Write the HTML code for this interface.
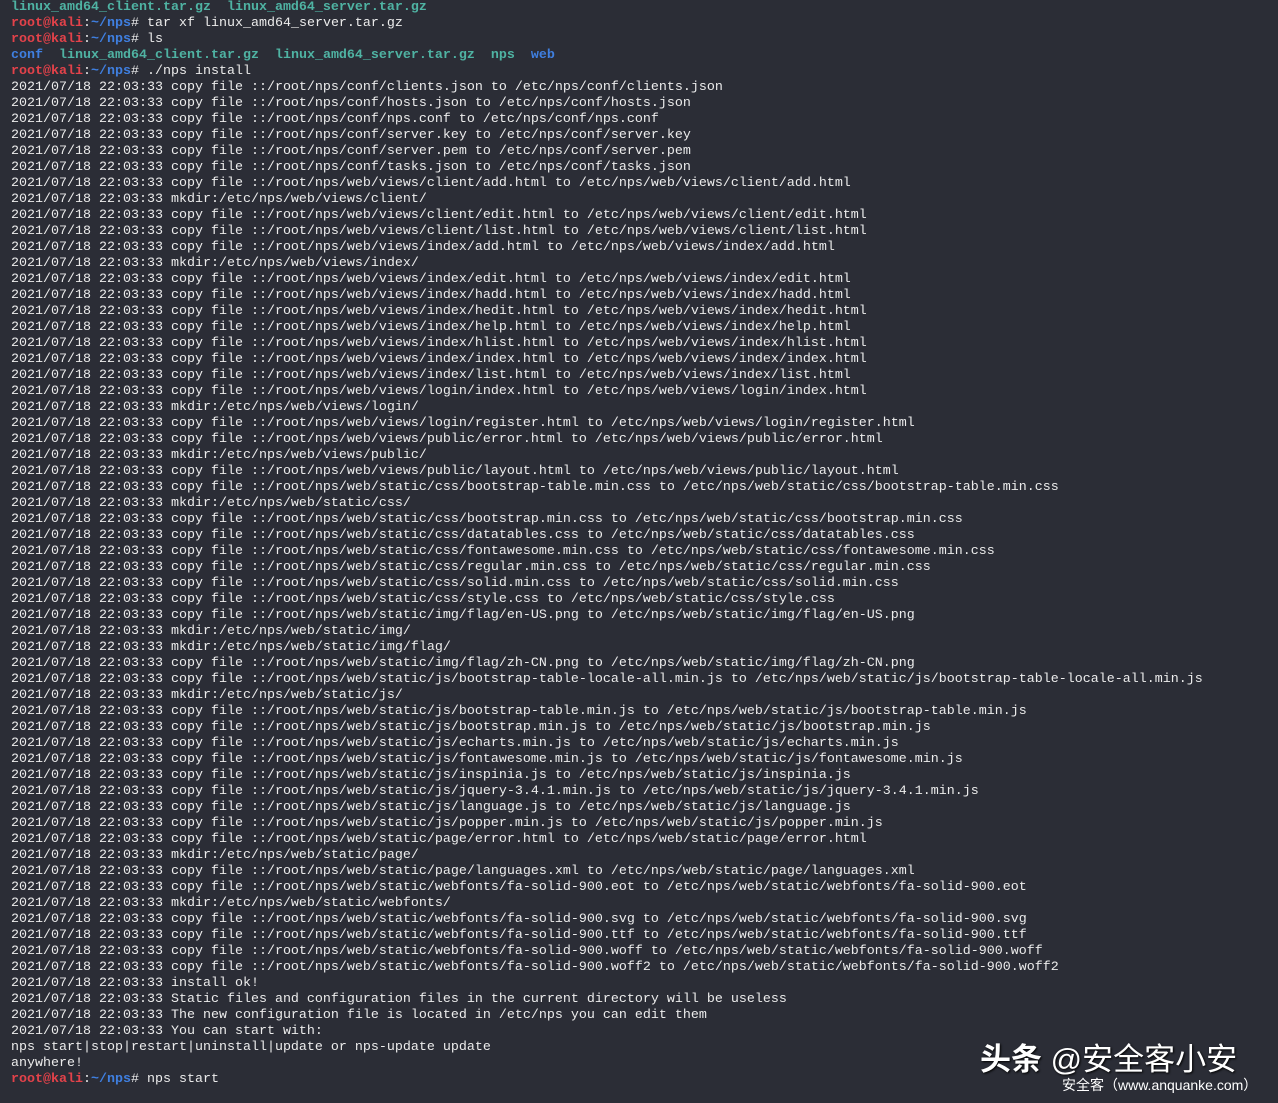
<!DOCTYPE html>
<html><head><meta charset="utf-8"><style>
html,body{margin:0;padding:0;background:#2b2d36;width:1278px;height:1103px;overflow:hidden}
pre{margin:0;position:absolute;left:11px;top:0px;font-family:"Liberation Mono",monospace;font-size:13.33px;line-height:16px;color:#ececec;white-space:pre}
.r{color:#e3424a;font-weight:bold}.b{color:#3f7fe0;font-weight:bold}.t{color:#4fb3a3;font-weight:bold}
.w1{position:absolute;left:980px;top:1034px;font-family:"Liberation Sans","Noto Sans CJK SC",sans-serif;font-size:31px;color:#fff;text-shadow:1px 1px 2px #000;white-space:nowrap}
.w2{position:absolute;left:1062px;top:1075px;font-family:"Liberation Sans","Noto Sans CJK SC",sans-serif;font-size:14px;color:#fff;white-space:nowrap}
</style></head><body>
<pre><span class="t">linux_amd64_client.tar.gz  linux_amd64_server.tar.gz</span>
<span class="r">root@kali</span>:<span class="b">~/nps</span># tar xf linux_amd64_server.tar.gz
<span class="r">root@kali</span>:<span class="b">~/nps</span># ls
<span class="b">conf</span>  <span class="t">linux_amd64_client.tar.gz  linux_amd64_server.tar.gz  nps</span>  <span class="b">web</span>
<span class="r">root@kali</span>:<span class="b">~/nps</span># ./nps install
2021/07/18 22:03:33 copy file ::/root/nps/conf/clients.json to /etc/nps/conf/clients.json
2021/07/18 22:03:33 copy file ::/root/nps/conf/hosts.json to /etc/nps/conf/hosts.json
2021/07/18 22:03:33 copy file ::/root/nps/conf/nps.conf to /etc/nps/conf/nps.conf
2021/07/18 22:03:33 copy file ::/root/nps/conf/server.key to /etc/nps/conf/server.key
2021/07/18 22:03:33 copy file ::/root/nps/conf/server.pem to /etc/nps/conf/server.pem
2021/07/18 22:03:33 copy file ::/root/nps/conf/tasks.json to /etc/nps/conf/tasks.json
2021/07/18 22:03:33 copy file ::/root/nps/web/views/client/add.html to /etc/nps/web/views/client/add.html
2021/07/18 22:03:33 mkdir:/etc/nps/web/views/client/
2021/07/18 22:03:33 copy file ::/root/nps/web/views/client/edit.html to /etc/nps/web/views/client/edit.html
2021/07/18 22:03:33 copy file ::/root/nps/web/views/client/list.html to /etc/nps/web/views/client/list.html
2021/07/18 22:03:33 copy file ::/root/nps/web/views/index/add.html to /etc/nps/web/views/index/add.html
2021/07/18 22:03:33 mkdir:/etc/nps/web/views/index/
2021/07/18 22:03:33 copy file ::/root/nps/web/views/index/edit.html to /etc/nps/web/views/index/edit.html
2021/07/18 22:03:33 copy file ::/root/nps/web/views/index/hadd.html to /etc/nps/web/views/index/hadd.html
2021/07/18 22:03:33 copy file ::/root/nps/web/views/index/hedit.html to /etc/nps/web/views/index/hedit.html
2021/07/18 22:03:33 copy file ::/root/nps/web/views/index/help.html to /etc/nps/web/views/index/help.html
2021/07/18 22:03:33 copy file ::/root/nps/web/views/index/hlist.html to /etc/nps/web/views/index/hlist.html
2021/07/18 22:03:33 copy file ::/root/nps/web/views/index/index.html to /etc/nps/web/views/index/index.html
2021/07/18 22:03:33 copy file ::/root/nps/web/views/index/list.html to /etc/nps/web/views/index/list.html
2021/07/18 22:03:33 copy file ::/root/nps/web/views/login/index.html to /etc/nps/web/views/login/index.html
2021/07/18 22:03:33 mkdir:/etc/nps/web/views/login/
2021/07/18 22:03:33 copy file ::/root/nps/web/views/login/register.html to /etc/nps/web/views/login/register.html
2021/07/18 22:03:33 copy file ::/root/nps/web/views/public/error.html to /etc/nps/web/views/public/error.html
2021/07/18 22:03:33 mkdir:/etc/nps/web/views/public/
2021/07/18 22:03:33 copy file ::/root/nps/web/views/public/layout.html to /etc/nps/web/views/public/layout.html
2021/07/18 22:03:33 copy file ::/root/nps/web/static/css/bootstrap-table.min.css to /etc/nps/web/static/css/bootstrap-table.min.css
2021/07/18 22:03:33 mkdir:/etc/nps/web/static/css/
2021/07/18 22:03:33 copy file ::/root/nps/web/static/css/bootstrap.min.css to /etc/nps/web/static/css/bootstrap.min.css
2021/07/18 22:03:33 copy file ::/root/nps/web/static/css/datatables.css to /etc/nps/web/static/css/datatables.css
2021/07/18 22:03:33 copy file ::/root/nps/web/static/css/fontawesome.min.css to /etc/nps/web/static/css/fontawesome.min.css
2021/07/18 22:03:33 copy file ::/root/nps/web/static/css/regular.min.css to /etc/nps/web/static/css/regular.min.css
2021/07/18 22:03:33 copy file ::/root/nps/web/static/css/solid.min.css to /etc/nps/web/static/css/solid.min.css
2021/07/18 22:03:33 copy file ::/root/nps/web/static/css/style.css to /etc/nps/web/static/css/style.css
2021/07/18 22:03:33 copy file ::/root/nps/web/static/img/flag/en-US.png to /etc/nps/web/static/img/flag/en-US.png
2021/07/18 22:03:33 mkdir:/etc/nps/web/static/img/
2021/07/18 22:03:33 mkdir:/etc/nps/web/static/img/flag/
2021/07/18 22:03:33 copy file ::/root/nps/web/static/img/flag/zh-CN.png to /etc/nps/web/static/img/flag/zh-CN.png
2021/07/18 22:03:33 copy file ::/root/nps/web/static/js/bootstrap-table-locale-all.min.js to /etc/nps/web/static/js/bootstrap-table-locale-all.min.js
2021/07/18 22:03:33 mkdir:/etc/nps/web/static/js/
2021/07/18 22:03:33 copy file ::/root/nps/web/static/js/bootstrap-table.min.js to /etc/nps/web/static/js/bootstrap-table.min.js
2021/07/18 22:03:33 copy file ::/root/nps/web/static/js/bootstrap.min.js to /etc/nps/web/static/js/bootstrap.min.js
2021/07/18 22:03:33 copy file ::/root/nps/web/static/js/echarts.min.js to /etc/nps/web/static/js/echarts.min.js
2021/07/18 22:03:33 copy file ::/root/nps/web/static/js/fontawesome.min.js to /etc/nps/web/static/js/fontawesome.min.js
2021/07/18 22:03:33 copy file ::/root/nps/web/static/js/inspinia.js to /etc/nps/web/static/js/inspinia.js
2021/07/18 22:03:33 copy file ::/root/nps/web/static/js/jquery-3.4.1.min.js to /etc/nps/web/static/js/jquery-3.4.1.min.js
2021/07/18 22:03:33 copy file ::/root/nps/web/static/js/language.js to /etc/nps/web/static/js/language.js
2021/07/18 22:03:33 copy file ::/root/nps/web/static/js/popper.min.js to /etc/nps/web/static/js/popper.min.js
2021/07/18 22:03:33 copy file ::/root/nps/web/static/page/error.html to /etc/nps/web/static/page/error.html
2021/07/18 22:03:33 mkdir:/etc/nps/web/static/page/
2021/07/18 22:03:33 copy file ::/root/nps/web/static/page/languages.xml to /etc/nps/web/static/page/languages.xml
2021/07/18 22:03:33 copy file ::/root/nps/web/static/webfonts/fa-solid-900.eot to /etc/nps/web/static/webfonts/fa-solid-900.eot
2021/07/18 22:03:33 mkdir:/etc/nps/web/static/webfonts/
2021/07/18 22:03:33 copy file ::/root/nps/web/static/webfonts/fa-solid-900.svg to /etc/nps/web/static/webfonts/fa-solid-900.svg
2021/07/18 22:03:33 copy file ::/root/nps/web/static/webfonts/fa-solid-900.ttf to /etc/nps/web/static/webfonts/fa-solid-900.ttf
2021/07/18 22:03:33 copy file ::/root/nps/web/static/webfonts/fa-solid-900.woff to /etc/nps/web/static/webfonts/fa-solid-900.woff
2021/07/18 22:03:33 copy file ::/root/nps/web/static/webfonts/fa-solid-900.woff2 to /etc/nps/web/static/webfonts/fa-solid-900.woff2
2021/07/18 22:03:33 install ok!
2021/07/18 22:03:33 Static files and configuration files in the current directory will be useless
2021/07/18 22:03:33 The new configuration file is located in /etc/nps you can edit them
2021/07/18 22:03:33 You can start with:
nps start|stop|restart|uninstall|update or nps-update update
anywhere!
<span class="r">root@kali</span>:<span class="b">~/nps</span># nps start</pre>
<div class="w1"><b>头条</b> @安全客小安</div>
<div class="w2">安全客（www.anquanke.com）</div>
</body></html>
